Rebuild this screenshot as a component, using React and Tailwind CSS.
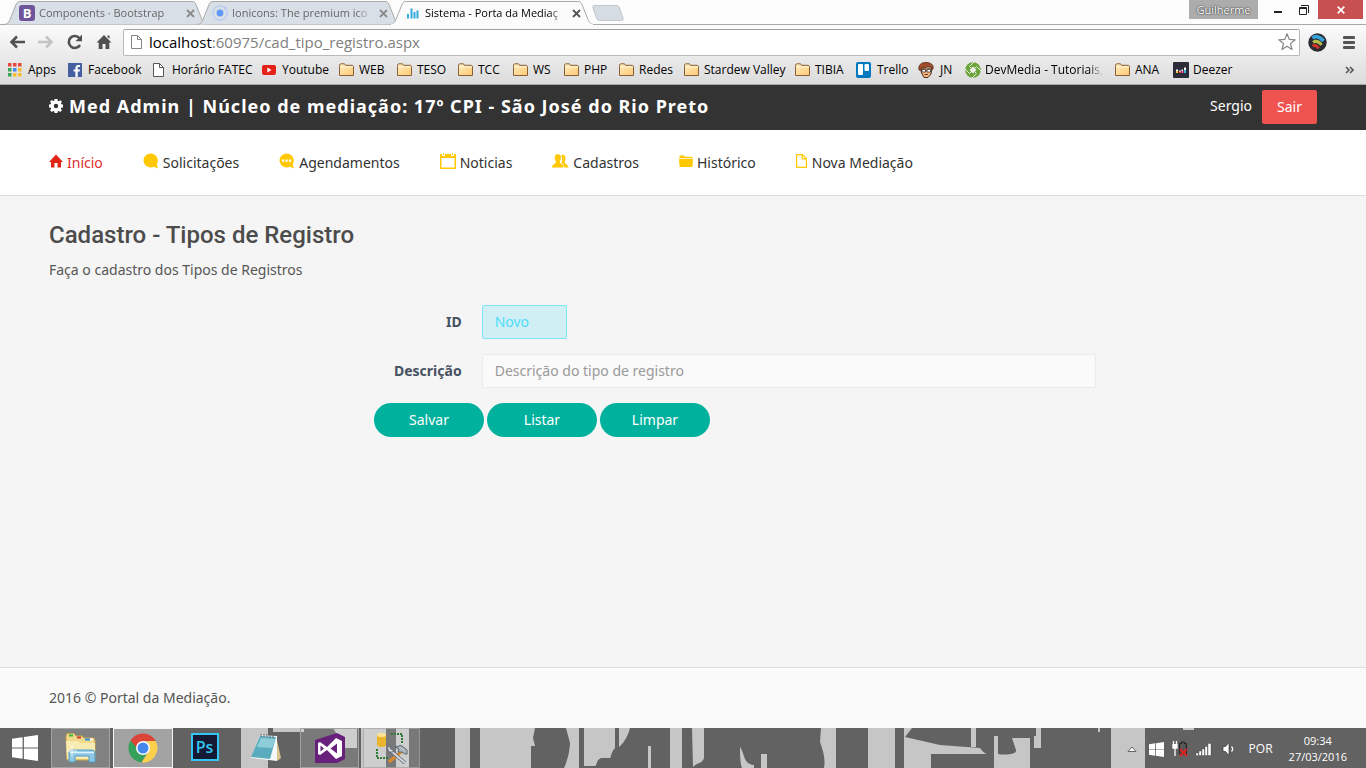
import React from "react";

const Folder = () => (
  <svg width="16" height="14" viewBox="0 0 16 14" className="shrink-0">
    <defs>
      <linearGradient id="fold" x1="0" y1="0" x2="1" y2="1">
        <stop offset="0" stopColor="#ffeebf" />
        <stop offset="1" stopColor="#ffc872" />
      </linearGradient>
    </defs>
    <path d="M.5 3.500V2L1.500.8H5.500L6.500 2.300H13.500L14.500 3.300V12.500H.5Z" fill="url(#fold)" stroke="#87603a" strokeLinejoin="round" />
    <path d="M1 4H14" stroke="#fff6dc" />
  </svg>
);

const PageIcon = ({ stroke = "#555" }) => (
  <svg width="14" height="16" viewBox="0 0 14 16" className="shrink-0">
    <path d="M1.500 1.500H7.500L11.500 5.500V14.500H1.500Z" fill="#fff" stroke={stroke} />
    <path d="M7.500 1.500V5.500H11.500" fill="none" stroke={stroke} />
  </svg>
);

const AppsIcon = () => (
  <svg width="14" height="14" viewBox="0 0 14 14" className="shrink-0">
    {["#e8453c", "#e8453c", "#e8453c", "#3aa757", "#4688f1", "#f9bb2d", "#3aa757", "#f9bb2d", "#f9bb2d"].map((c, i) => (
      <rect key={i} x={(i % 3) * 5} y={Math.floor(i / 3) * 5} width="3.500" height="3.500" fill={c} />
    ))}
  </svg>
);

const FacebookIcon = () => (
  <svg width="14" height="14" viewBox="0 0 14 14" className="shrink-0">
    <rect width="14" height="14" fill="#4460a0" />
    <path d="M7.4 14V8.6H5.6V6.4H7.4V4.9C7.4 3 8.500 2 10.200 2H12V4.100H10.800C10 4.100 9.700 4.500 9.700 5.200V6.400H12L11.700 8.600H9.700V14Z" fill="#fff" />
  </svg>
);

const YoutubeIcon = () => (
  <svg width="14" height="10" viewBox="0 0 14 10" className="shrink-0">
    <rect width="14" height="10" rx="2" fill="#e62117" />
    <path d="M5.300 2.500V7.500L9.500 5Z" fill="#fff" />
  </svg>
);

const TrelloIcon = () => (
  <svg width="15" height="16" viewBox="0 0 15 16" className="shrink-0">
    <rect width="15" height="16" rx="2" fill="#0079c1" />
    <rect x="2" y="2" width="5" height="11" rx="1" fill="#fff" />
    <rect x="8.500" y="2" width="4.500" height="7" rx="1" fill="#fff" />
  </svg>
);

const FaceIcon = () => (
  <svg width="16" height="16" viewBox="0 0 16 16" className="shrink-0">
    <path d="M2.500 6L3.500 11L6 15.500H10L13 12L14 6Z" fill="#f2b67e" stroke="#54301c" />
    <path d="M1 8C0 3 3 .5 8 .5S16 3 15 7L13.500 8V5L9 4.500L6 6L3.500 5.500V8.500Z" fill="#a44b2a" stroke="#54301c" strokeWidth=".8" />
    <path d="M4 7.500H7.500V10H4ZM9 7.500H12.500V10H9ZM7.500 8.500H9" fill="#fff" stroke="#333" strokeWidth=".8" />
    <path d="M6.500 12.500H10" stroke="#703522" />
  </svg>
);

const DevIcon = () => (
  <svg width="16" height="16" viewBox="0 0 16 16" className="shrink-0">
    <circle cx="8" cy="8" r="7.800" fill="#6aa338" />
    <path d="M8 4.500L11.500 8L8 11.500L4.500 8Z" fill="#eee" />
    <path d="M9 0L4.500 4.500L8 8M16 9L11.500 4.500L8 8M7 16L11.500 11.500L8 8M0 7L4.500 11.500L8 8" stroke="#e8eee0" strokeWidth="1" fill="none" />
  </svg>
);

const DeezerIcon = () => (
  <svg width="16" height="16" viewBox="0 0 16 16" className="shrink-0">
    <rect width="16" height="16" rx="1" fill="#2c2c38" />
    <path d="M3 7.500H5V9H3ZM6 8.500H8V10H6ZM8.500 7.500H10V9H8.500ZM11 5.500H13V8H11Z" fill="#fff" />
    <path d="M3 9H5V11H3Z" fill="#f5c63c" />
    <path d="M6 9.500H8V11H6Z" fill="#e74136" />
    <path d="M8.500 9H10.500V11H8.500Z" fill="#e84a9a" />
    <path d="M11 8H13V11H11Z" fill="#37b6e0" />
  </svg>
);

const BOOKMARKS = [
  ["Apps", AppsIcon, "w-[60px] gap-1.5"],
  ["Facebook", FacebookIcon, "w-[84px] gap-1.5"],
  ["Horário FATEC", PageIcon, "w-[110px] gap-1.5"],
  ["Youtube", YoutubeIcon, "w-[77px] gap-1.5"],
  ["WEB", Folder, "w-[58px] gap-1"],
  ["TESO", Folder, "w-[61px] gap-1"],
  ["TCC", Folder, "w-[55px] gap-1"],
  ["WS", Folder, "w-[51px] gap-1"],
  ["PHP", Folder, "w-[55px] gap-1"],
  ["Redes", Folder, "w-[65px] gap-1"],
  ["Stardew Valley", Folder, "w-[111px] gap-1"],
  ["TIBIA", Folder, "w-[61px] gap-1"],
  ["Trello", TrelloIcon, "w-[62px] gap-1.5"],
  ["JN", FaceIcon, "w-[47px] gap-1.5"],
  ["DevMedia - Tutoriais,", DevIcon, "w-[150px] gap-1"],
  ["ANA", Folder, "w-[58px] gap-1"],
  ["Deezer", DeezerIcon, "w-[70px] gap-1"],
];

const BootstrapFav = () => (
  <span className="flex size-4 shrink-0 items-center justify-center rounded-[3px] bg-[#6f5499] text-[13px] leading-4 font-bold text-white">B</span>
);
const IonicFav = () => (
  <svg width="16" height="16" viewBox="0 0 16 16" className="shrink-0">
    <circle cx="8" cy="8" r="7.200" fill="none" stroke="#a9c6f5" />
    <circle cx="8" cy="8" r="3.400" fill="#6099f5" />
    <circle cx="13" cy="3" r="1.300" fill="#a9c6f5" />
  </svg>
);
const BarsFav = () => (
  <svg width="16" height="16" viewBox="0 0 16 16" className="shrink-0">
    <path d="M3 9V13.500M6.500 3.500V13.500M9.500 7V13.500M12.500 5.500V13.500" stroke="#35a9dc" strokeWidth="2" />
  </svg>
);

function Tab({ title, Fav, active, className }) {
  return (
    <div className={`relative flex h-[25px] items-center pt-px pl-[15px] ${className}`}>
      <svg className="absolute inset-0 h-full w-full" viewBox="0 0 204 25" preserveAspectRatio="none">
        <path
          d="M0 24.500C4 24 5 22 6 19.500L12 4.500C13 2 14 1.500 17 1.500H187C190 1.500 191 2 192 4.500L198 19.500C199 22 200 24 204 24.500"
          fill={active ? "#fbfbfb" : "#d9dfe7"}
          stroke="#a9a9a9"
        />
        {active && <path d="M1 24.500H203" stroke="#fbfbfb" strokeWidth="1.500" />}
      </svg>
      <div className={`relative flex items-center gap-1 text-[11px] leading-4 ${active ? "text-black" : "text-[#666]"}`}>
        <Fav />
        <span className="w-[141px] whitespace-nowrap [mask-image:linear-gradient(to_right,black_88%,transparent)]">{title}</span>
        <button aria-label={`Fechar ${title}`} className="flex size-3 items-center justify-center">
          <svg width="9" height="9" viewBox="0 0 9 9">
            <path d="M1 1L8 8M8 1L1 8" stroke={active ? "#555" : "#8b8b8b"} strokeWidth="1.800" />
          </svg>
        </button>
      </div>
    </div>
  );
}

function Browser() {
  return (
    <div className="font-['Open_Sans',sans-serif]">
      <div className="flex h-[25px] items-start bg-[#fcfcfc] shadow-[inset_0_-1px_0_#a9a9a9]">
        <Tab title="Components · Bootstrap" Fav={BootstrapFav} className="ml-1 w-[204px]" />
        <Tab title="Ionicons: The premium ico" Fav={IonicFav} className="-ml-[11px] w-[204px]" />
        <Tab title="Sistema - Porta da Mediaç" Fav={BarsFav} active className="-ml-[11px] w-[204px]" />
        <button aria-label="Nova guia" className="mt-[5px] -ml-0.5">
          <svg width="32" height="16" viewBox="0 0 32 16">
            <path d="M3 .5H24C26 .5 27 1 27.500 3L31 13C31.500 15 31 15.500 29 15.500H9C6 15.500 5.500 15 4.500 13L1 3C.5 1 1 .5 3 .5Z" fill="#d6dce4" stroke="#c3c6cb" />
          </svg>
        </button>
        <div className="ml-auto flex h-[19px] items-stretch pr-[3px]">
          <button className="mr-4 w-[69px] bg-[#acacac] text-[11px] leading-[19px] text-white [text-shadow:0_0_2px_#333,0_0_1px_#333]">Guilherme</button>
          <button aria-label="Minimizar" className="flex w-2 items-end pb-1.5">
            <span className="h-0.5 w-2 bg-[#222]" />
          </button>
          <button aria-label="Restaurar" className="ml-[17px] flex w-[10px] items-center">
            <svg width="10" height="10" viewBox="0 0 10 10">
              <path d="M.5 2.500H7.500V9.500H.5ZM0 3.500H8M2 .5H9.500V8" fill="none" stroke="#222" />
            </svg>
          </button>
          <button aria-label="Fechar" className="ml-[9px] flex w-[45px] items-center justify-center bg-[#c75050]">
            <svg width="8" height="8" viewBox="0 0 8 8">
              <path d="M.7.7L7.300 7.300M7.300.7L.7 7.300" stroke="#fff" strokeWidth="1.700" />
            </svg>
          </button>
        </div>
      </div>
      <div className="border-b border-[#a5a5a5] bg-gradient-to-b from-[#fbfbfb] to-[#dcdcdc]">
        <div className="flex h-[34px] items-center pr-[11px] pl-[9px]">
          <button aria-label="Voltar" className="mr-[13px]">
            <svg width="16" height="14" viewBox="0 0 16 14">
              <path d="M8 1.500L2.500 7L8 12.500M2.500 7H16" fill="none" stroke="#505050" strokeWidth="2.600" />
            </svg>
          </button>
          <button aria-label="Avançar" className="mr-[13px]">
            <svg width="16" height="14" viewBox="0 0 16 14">
              <path d="M8 1.500L13.500 7L8 12.500M13.500 7H0" fill="none" stroke="#c4c4c4" strokeWidth="2.600" />
            </svg>
          </button>
          <button aria-label="Recarregar" className="mr-[13px]">
            <svg width="16" height="16" viewBox="0 0 16 16">
              <path d="M13 11A6 6 0 1 1 12.500 4.200" fill="none" stroke="#505050" strokeWidth="2.600" />
              <path d="M15 .5V7.200H8.500Z" fill="#505050" />
            </svg>
          </button>
          <button aria-label="Página inicial" className="mr-[11px]">
            <svg width="16" height="16" viewBox="0 0 16 16">
              <path d="M8 1L15.500 8.500H13.300V15H9.500V10H6.500V15H2.700V8.500H.5ZM11.500 1.500H13.500V5L11.500 3Z" fill="#505050" />
            </svg>
          </button>
          <label className="flex h-[27px] min-w-0 flex-1 items-center rounded-[2px] border border-[#b9b9b9] border-t-[#a0a0a0] bg-white pr-[3px] pl-1.5">
            <PageIcon stroke="#858585" />
            <span className="ml-[5px] flex-1 text-[15px] leading-5 text-[#808080]">
              <span className="text-black">localhost</span>:60975/cad_tipo_registro.aspx
            </span>
            <svg width="18" height="18" viewBox="0 0 18 18">
              <path d="M9 .8L11.200 6.400L17.200 6.800L12.500 10.600L14 16.500L9 13.200L4 16.500L5.500 10.600L.8 6.800L6.800 6.400Z" fill="#fff" stroke="#858585" strokeWidth="1.200" strokeLinejoin="round" />
            </svg>
          </label>
          <button aria-label="Extensão" className="ml-2">
            <svg width="19" height="19" viewBox="0 0 19 19">
              <circle cx="9.500" cy="9.500" r="9.200" fill="#2b2b33" />
              <path d="M4.500 5C8 2.500 12.500 4 15.500 8" fill="none" stroke="#39a2d8" strokeWidth="3.800" />
              <path d="M5 9.200C8 7.500 11 8.500 13.500 12" fill="none" stroke="#b5bd4c" strokeWidth="3" />
              <path d="M4.500 13C7 11.800 9 12.500 10.500 15.500" fill="none" stroke="#cf3329" strokeWidth="3" />
            </svg>
          </button>
          <button aria-label="Menu" className="ml-4 flex w-3 flex-col gap-0.5">
            <span className="h-[3px] rounded-[1px] bg-[#555]" />
            <span className="h-[3px] rounded-[1px] bg-[#555]" />
            <span className="h-[3px] rounded-[1px] bg-[#555]" />
          </button>
        </div>
        <nav className="flex h-[25px] items-center overflow-hidden pr-3 pb-1 pl-2 text-[12px] leading-4 text-black" aria-label="Favoritos">
          {BOOKMARKS.map(([name, Icon, cls]) => (
            <a key={name} href="#" className={`flex h-full shrink-0 items-center whitespace-nowrap ${cls}`}>
              <Icon />
              <span className={name.startsWith("Dev") ? "[mask-image:linear-gradient(to_right,black_88%,transparent)]" : ""}>{name}</span>
            </a>
          ))}
          <button aria-label="Mais favoritos" className="ml-auto">
            <svg width="9" height="8" viewBox="0 0 9 8">
              <path d="M1 1L4 4L1 7M5 1L8 4L5 7" fill="none" stroke="#555" strokeWidth="1.600" />
            </svg>
          </button>
        </nav>
      </div>
    </div>
  );
}

const NAV = [
  ["Início", <svg width="14" height="14" viewBox="0 0 14 14"><path d="M7 .5L14 8H12V13.500H8.500V9H5.500V13.500H2V8H0Z" fill="#e0251b" /></svg>],
  ["Solicitações", <svg width="16" height="16" viewBox="0 0 16 16"><path d="M7.500 .5A7.300 7 0 1 0 11 13.800L15 15.500L13.800 11.500A7.300 7.300 0 0 0 7.500 .5Z" fill="#ffc800" /></svg>],
  ["Agendamentos", <svg width="16" height="16" viewBox="0 0 16 16"><path d="M7.500 .5A7.300 7 0 1 0 11 13.800L15 15.500L13.800 11.500A7.300 7.300 0 0 0 7.500 .5Z" fill="#ffc800" /><path d="M3 6.500H5.200V8.700H3ZM6.500 6.500H8.700V8.700H6.500ZM10 6.500H12.200V8.700H10Z" fill="#fff" /></svg>],
  ["Noticias", <svg width="16" height="16" viewBox="0 0 16 16"><path d="M0 1H2V3H5V1H11V3H14V1H16V16H0ZM1.500 5V14.500H14.500V5Z" fill="#ffc800" fillRule="evenodd" /><path d="M3 0H4V2H3ZM12 0H13V2H12Z" fill="#ffc800" /></svg>],
  ["Cadastros", <svg width="17" height="14" viewBox="0 0 17 14"><path d="M9 1.500C10 .3 13.800.3 13.500 4.500C13.400 6.500 12.500 7 12.600 8.500C13 9.800 16 10 16.500 13.500H12.500C12 10.500 10 10 9.500 8.500C10.500 6 10.500 3.500 9 1.500Z" fill="#ffc800" /><path d="M5.800.3C8.300.3 9.200 2 8.900 4.300C8.700 6.500 7.700 6.800 7.800 8.300C8.200 9.900 11.500 10 11.800 13.500H0C.2 10 3.500 9.900 3.900 8.300C4 6.800 3 6.500 2.700 4.300C2.500 2 3.400.3 5.800.3Z" fill="#ffc800" /></svg>],
  ["Histórico", <svg width="14" height="12" viewBox="0 0 14 12"><path d="M.5 2.500V1.500C.5 1 1 .5 1.500.5H5L6.200 1.700H12.500C13 1.700 13.500 2 13.500 2.500V3H.5Z" fill="#ffc800" /><path d="M0 3.700H14L13.500 11C13.500 11.600 13 12 12.500 12H1.500C1 12 .5 11.600.5 11Z" fill="#ffc800" /></svg>],
  ["Nova Mediação", <svg width="12" height="14" viewBox="0 0 12 14"><path d="M.6.600H6.500L10.400 4.600V13.400H.6ZM6.300.6V4.800H10.400" fill="none" stroke="#ffc800" strokeWidth="1.200" /></svg>],
];

function Site() {
  return (
    <div className="flex flex-1 flex-col bg-[#f5f5f5] font-['Noto_Sans',sans-serif] text-sm text-[#555]">
      <header className="flex h-[45px] items-center justify-between bg-[#333] px-[49px] pb-0.5 text-white">
        <h1 className="flex items-center gap-1.5 pb-0.5 text-[18px] leading-6 font-bold tracking-[1px]">
          <svg width="14" height="14" viewBox="0 0 14 14">
            <path d="M5.600 0H8.400L8.800 1.900L9.800 2.300L11.400 1.200L13 2.800L11.900 4.300L12.200 5.200L14 5.600V8.400L12.200 8.800L11.900 9.700L13 11.200L11.200 13L9.700 11.900L8.800 12.200L8.400 14H5.600L5.200 12.200L4.300 11.900L2.800 13L1 11.200L2.100 9.700L1.800 8.800L0 8.400V5.600L1.800 5.200L2.100 4.300L1 2.800L2.800 1L4.300 2.100L5.200 1.800ZM7 4.800A2.200 2.200 0 1 0 7 9.200A2.200 2.200 0 1 0 7 4.800Z" fill="#fff" fillRule="evenodd" />
          </svg>
          Med Admin | Núcleo de mediação: 17º CPI - São José do Rio Preto
        </h1>
        <div className="flex items-center gap-2.5">
          <span className="pb-0.5">Sergio</span>
          <button className="h-[34px] w-[55px] rounded-[2px] bg-[#ef5350] text-white">Sair</button>
        </div>
      </header>
      <nav className="flex h-[66px] items-center gap-10 border-b border-[#ddd] bg-white px-[49px]" aria-label="Principal">
        {NAV.map(([name, icon], i) => (
          <a key={name} href="#" className={`flex items-center gap-1 ${i === 0 ? "text-[#dd2c2c]" : "text-[#333]"}`}>
            <span className="pb-[3px]">{icon}</span>
            {name}
          </a>
        ))}
      </nav>
      <main className="flex-1 px-[49px] pt-[23px]">
        <h2 className="font-[Roboto,sans-serif] text-2xl leading-8 font-medium text-[#4c4c4c]">Cadastro - Tipos de Registro</h2>
        <p className="mt-[9px] leading-5">Faça o cadastro dos Tipos de Registros</p>
        <form className="mt-[25px] flex flex-col gap-[15px]" onSubmit={(e) => e.preventDefault()}>
          <div className="flex items-center">
            <label htmlFor="id" className="w-1/3 pr-2.5 text-right font-bold text-[#465161]">ID</label>
            <div className="w-1/2 px-2.5">
              <input id="id" placeholder="Novo" className="block h-[34px] w-[85px] rounded-[2px] border border-[#7ee5f7] bg-[#d0eff5] px-3 pb-0.5 placeholder:text-[#4ddcf9]" />
            </div>
          </div>
          <div className="flex items-center">
            <label htmlFor="desc" className="w-1/3 pr-2.5 text-right font-bold text-[#465161]">Descrição</label>
            <div className="w-1/2 px-2.5">
              <input id="desc" placeholder="Descrição do tipo de registro" className="block h-[34px] w-full rounded-[2px] border border-[#ebebeb] bg-[#fafafa] px-3 pb-0.5 placeholder:text-[#999]" />
            </div>
          </div>
          <div className="pl-[25%]">
            <div className="flex gap-[3px] pl-2 text-white">
              <button className="h-[34px] w-[110px] rounded-full bg-[#00b19d]">Salvar</button>
              <button className="h-[34px] w-[110px] rounded-full bg-[#00b19d]">Listar</button>
              <button className="h-[34px] w-[110px] rounded-full bg-[#00b19d]">Limpar</button>
            </div>
          </div>
        </form>
      </main>
      <footer className="flex h-[61px] items-center border-t border-[#ddd] bg-[#fafafa] px-[49px]">2016 © Portal da Mediação.</footer>
    </div>
  );
}

const WinLogo = ({ size }) => (
  <svg width={size} height={size} viewBox="0 0 26 26">
    <path d="M0 3.700L10.600 2.200V12.400H0ZM11.900 2L26 0V12.400H11.900ZM0 13.600H10.600V23.800L0 22.300ZM11.900 13.600H26V26L11.900 24Z" fill="#fff" />
  </svg>
);

const Explorer = () => (
  <svg width="34" height="32" viewBox="0 0 34 32">
    <path d="M2 5L3 1.500H10L12 4H18L20 6H30L31 9V26L29 28H3Z" fill="#f0d98a" stroke="#c9a64b" />
    <path d="M5 2.500H9V4.500H5Z" fill="#35b53c" />
    <path d="M13 4.500H17V6.500H13Z" fill="#d5382b" />
    <path d="M21 6.500H26V8.500H21Z" fill="#2f8fd8" />
    <path d="M26 6.500H29V8.500H26Z" fill="#fff" />
    <path d="M2 9H14L16 11H31V27H3Z" fill="#f8ebb2" />
    <path d="M5 30V21C5 19 6 18 9 18H27C30 18 31 19 31 21V30H25V24H11V30Z" fill="#8fc8e6" stroke="#4e9cc5" />
    <path d="M6 20.500H30" fill="none" stroke="#dff3fb" strokeWidth="1.500" />
    <path d="M8 13V25M3 19H13" stroke="#fff" opacity=".8" />
  </svg>
);

const Chrome = () => (
  <svg width="30" height="30" viewBox="0 0 30 30">
    <path d="M2.500 7.500A14.500 14.500 0 0 0 13.500 29.400L20 18.500L15 15Z" fill="#36a15b" />
    <path d="M27.600 8A14.500 14.500 0 0 1 13.500 29.400L20.800 18.600L20 9L15 8Z" fill="#fbd04b" />
    <path d="M27.600 8H15L9 15L2.500 7.500A14.500 14.500 0 0 1 27.600 8Z" fill="#dc4437" />
    <circle cx="15" cy="15" r="7" fill="#fff" />
    <circle cx="15" cy="15" r="5.500" fill="#4687ee" />
  </svg>
);

const Notepad = () => (
  <svg width="32" height="30" viewBox="0 0 32 30">
    <path d="M26 3L31 25L27 28Z" fill="#d8c38c" />
    <path d="M10 2L27 3L27 28L1 25Z" fill="#f3f7f8" />
    <path d="M10 3L26 4L20 26L1 24Z" fill="#5aabbe" />
    <path d="M11 5L25 6L22 15L7 14Z" fill="#8fcdd9" />
    <path d="M11 1V4M14 1V4M17 1V4M20 1.500V4.500M23 2V5" stroke="#5e6669" />
  </svg>
);

const VisualStudio = () => (
  <svg width="30" height="30" viewBox="0 0 30 30">
    <path d="M0 7L22 0L30 4V26L22 30H0Z" fill="#68217a" />
    <path d="M3 10L5 9L12 14L21 5L27 8V23L21 26L12 17L5 22L3 21ZM5.500 12.500V18.500L9 15.500ZM22 10.500L15.500 15.500L22 20.500Z" fill="#fff" fillRule="evenodd" />
  </svg>
);

const DbTools = () => (
  <svg width="34" height="32" viewBox="0 0 34 32">
    <path d="M2 3V13C2 15.500 11 15.500 11 13V3Z" fill="#eab42c" />
    <ellipse cx="6.500" cy="3" rx="4.500" ry="2" fill="#ffe391" />
    <path d="M16 2H27V12M2 17V26H13" fill="none" stroke="#2e7b35" strokeWidth="2" strokeDasharray="2 1" />
    <path d="M27 19L14 30" stroke="#d98b2b" strokeWidth="3" />
    <path d="M15 18L30 31" stroke="#59636c" strokeWidth="3.500" />
    <path d="M15 18L30 31" stroke="#d3dae0" strokeWidth="2" />
    <path d="M12 15L15 14.500L15.500 17L18 17.500L18 20L14 20Z" fill="#d3dae0" stroke="#59636c" strokeWidth=".8" />
    <path d="M20 15L26 13.500L29 15.500L32 18V22H30L27 20L23 20L24 17Z" fill="#aeb8c1" stroke="#59636c" />
  </svg>
);

function Taskbar() {
  return (
    <div className="relative h-10 overflow-hidden bg-[#626262] font-['Open_Sans',sans-serif] text-white">
      <svg className="absolute inset-0 h-full w-full" viewBox="0 0 1366 40" preserveAspectRatio="none">
        <path
          d="M241 0H268V40H241ZM273 0H304V4H273ZM333 0H357V20H345ZM361 0H386V40H361ZM396 0H409V40H396ZM455 0H470V40H455ZM480 0H535L533 10L535 18H531V40H480ZM566 0H579V40H564C568 32 570 20 570 15ZM584 0H615V20C610 26 612 28 610 30H601C596 32 597 38 595 38H584ZM619 0H630C628 8 624 15 619 19ZM648 18H651V40H648ZM670 0H682V40H670ZM692 0H704V30C702 36 698 34 693 39ZM740 19C745 26 743 36 754 37V40H742C740 35 740 25 740 19ZM761 26H767V40H761ZM821 0H836V40H824C826 30 822 20 820 14ZM868 0H895V40H868ZM904 0H912L905 9L940 17L980 20C983 24 985 26 988 26H931V40H904ZM971 0H976V19H971ZM994 8H998V26C1005 27 1017 27 1016 22L1012 10H1030V40H994ZM1036 0H1041V20H1034V8H1036ZM1098 0H1100V4H1098ZM1111 0H1145V40H1111ZM1183 0H1194V2H1183Z"
          fill="#c6c6c6"
        />
      </svg>
      <div className="relative flex h-full items-stretch">
        <button aria-label="Iniciar" className="mr-0.5 flex w-[49px] items-center justify-center"><WinLogo size={26} /></button>
        <button aria-label="Explorador" className="flex w-[59px] items-center justify-center border border-[#a2a2a2] bg-[#818181]"><Explorer /></button>
        <button aria-label="Chrome" className="ml-[3px] flex w-[60px] items-center justify-center border border-[#f5f5f5] bg-[#a2a2a2]"><Chrome /></button>
        <button aria-label="Photoshop" className="flex w-[63px] items-center justify-center pb-0.5">
          <span className="flex size-7 items-center justify-center border-2 border-[#34c5f2] bg-[#151a34] text-[16px] leading-5 font-semibold text-[#34c5f2]">Ps</span>
        </button>
        <button aria-label="Bloco de notas" className="flex w-[60px] items-center justify-center"><Notepad /></button>
        <button aria-label="Visual Studio" className="ml-1 flex w-[59px] items-center justify-center border border-[#a2a2a2] bg-white/15"><VisualStudio /></button>
        <button aria-label="Ferramentas" className="ml-1 flex w-[57px] items-center justify-center border border-[#a2a2a2]/70 bg-white/15"><DbTools /></button>
        <div className="ml-auto flex items-center pt-0.5 pr-[19px] text-[11px] leading-4">
          <svg width="10" height="6" viewBox="0 0 10 6" className="mr-3"><path d="M1 5.500L5 1L9 5.500Z" fill="#fff" stroke="#666" /></svg>
          <WinLogo size={15} />
          <svg width="16" height="16" viewBox="0 0 16 16" className="ml-2">
            <path d="M1 3V7H5V3M3 7V15M1.500 0V3M4.500 0V3" fill="#fff" stroke="#fff" strokeWidth="1.300" />
            <path d="M7.500 13V2.500H9.500V1H12.500V2.500H14.500V13Z" fill="#555" stroke="#222" />
            <path d="M8 8L15 15M15 8L8 15" stroke="#e02020" strokeWidth="2" />
          </svg>
          <svg width="16" height="13" viewBox="0 0 16 13" className="ml-2">
            <path d="M0 10H2.500V12.500H0ZM3 8H5.500V12.500H3ZM6 6H8.500V12.500H6ZM9 3.500H11.500V12.500H9ZM12 .5H15V12.500H12Z" fill="#fff" stroke="#444" strokeWidth=".4" />
          </svg>
          <svg width="13" height="14" viewBox="0 0 13 14" className="ml-2.5">
            <path d="M1 4.500H3.500L7 .5V13.500L3.500 9.500H1Z" fill="#fff" stroke="#333" strokeWidth=".7" />
            <path d="M9.500 4.500C11 6 11 8 9.500 9.500" fill="none" stroke="#fff" strokeWidth="1.400" />
          </svg>
          <span className="ml-3.5 w-10 text-[12px]">POR</span>
          <div className="text-center">
            <div>09:34</div>
            <div>27/03/2016</div>
          </div>
        </div>
      </div>
    </div>
  );
}

export default function App() {
  return (
    <div className="flex min-h-screen flex-col">
      <Browser />
      <Site />
      <Taskbar />
    </div>
  );
}
